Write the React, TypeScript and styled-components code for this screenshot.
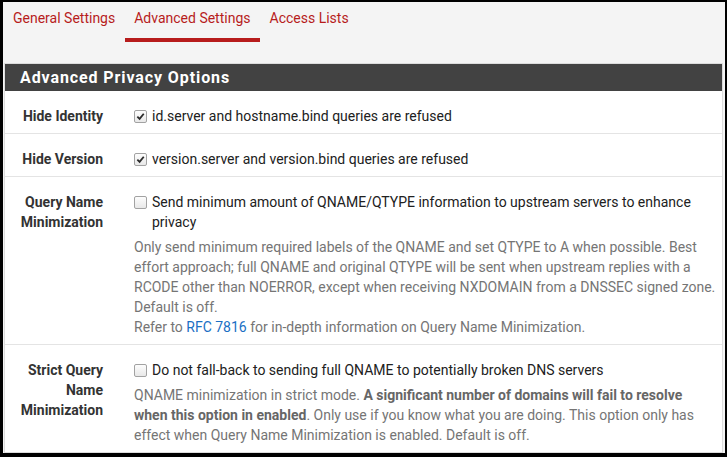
import styled, { createGlobalStyle } from "styled-components";

const GlobalStyle = createGlobalStyle`
  html, body {
    margin: 0;
    padding: 0;
    background: #000;
  }
  body {
    font-family: Roboto, "Noto Sans", "Liberation Sans", sans-serif;
    font-size: 14px;
    color: #212121;
  }
`;

const Frame = styled.div`
  box-sizing: border-box;
  width: 727px;
  height: 457px;
  border-style: solid;
  border-color: #000;
  border-width: 2px 2px 4px 3px;
  background: #f4f4f4;
  overflow: hidden;
`;

const Tabs = styled.div`
  display: flex;
  align-items: flex-end;
  padding-left: 1px;
  gap: 1px;
  margin-bottom: 21px;
`;

const Tab = styled.div<{ $active?: boolean }>`
  padding: 6px 9px 10px;
  line-height: 20px;
  font-size: 14px;
  color: #b71c1c;
  border-bottom: 4px solid ${(p) => (p.$active ? "#b71c1c" : "transparent")};
  cursor: pointer;
`;

const Panel = styled.div`
  margin: 0 2px 0 1px;
  border: 1px solid #dcdcdc;
  background: #fff;
`;

const PanelHeading = styled.div`
  background: #424242;
  color: #fff;
  font-weight: 700;
  font-size: 16px;
  letter-spacing: 0.9px;
  line-height: 27px;
  padding-left: 15px;
`;

const Row = styled.div`
  display: grid;
  grid-template-columns: 98px 1fr;
  column-gap: 31px;
  padding: 15px 0 7px;
  border-bottom: 1px solid #e4e4e4;

  &:last-child {
    border-bottom: none;
  }
`;

const Label = styled.div`
  text-align: right;
  font-weight: 700;
  color: #333;
  line-height: 20px;
  padding-left: 10px;
`;

const Field = styled.div`
  padding-right: 5px;
  line-height: 20px;
`;

const CheckLine = styled.div`
  display: flex;
  gap: 5px;
  color: #212121;
`;

const Box = styled.span`
  flex: none;
  box-sizing: border-box;
  width: 13px;
  height: 13px;
  margin-top: 4px;
  border: 1px solid #a2a2a2;
  border-radius: 2px;
  background: linear-gradient(#fdfdfd, #e8e8e8);
  display: flex;
  align-items: center;
  justify-content: center;
`;

const Help = styled.div`
  margin-top: 5px;
  color: #757575;

  b {
    color: #666;
  }
`;

const Link = styled.a`
  color: #1a6fc4;
  text-decoration: none;
`;

type Option = {
  label: string;
  text: string;
  checked: boolean;
  help?: React.ReactNode;
};

const options: Option[] = [
  {
    label: "Hide Identity",
    text: "id.server and hostname.bind queries are refused",
    checked: true,
  },
  {
    label: "Hide Version",
    text: "version.server and version.bind queries are refused",
    checked: true,
  },
  {
    label: "Query Name Minimization",
    text: "Send minimum amount of QNAME/QTYPE information to upstream servers to enhance privacy",
    checked: false,
    help: (
      <>
        Only send minimum required labels of the QNAME and set QTYPE to A when
        possible. Best effort approach; full QNAME and original QTYPE will be
        sent when upstream replies with a RCODE other than NOERROR, except when
        receiving NXDOMAIN from a DNSSEC signed zone. Default is off.
        <br />
        Refer to <Link href="#">RFC 7816</Link> for in-depth information on
        Query Name Minimization.
      </>
    ),
  },
  {
    label: "Strict Query Name Minimization",
    text: "Do not fall-back to sending full QNAME to potentially broken DNS servers",
    checked: false,
    help: (
      <>
        QNAME minimization in strict mode.{" "}
        <b>
          A significant number of domains will fail to resolve when this option
          in enabled
        </b>
        . Only use if you know what you are doing. This option only has effect
        when Query Name Minimization is enabled. Default is off.
      </>
    ),
  },
];

const tabs = ["General Settings", "Advanced Settings", "Access Lists"];

const App = () => {
  return (
    <>
      <GlobalStyle />
      <Frame>
        <Tabs>
          {tabs.map((t) => (
            <Tab key={t} $active={t === "Advanced Settings"}>
              {t}
            </Tab>
          ))}
        </Tabs>
        <Panel>
          <PanelHeading>Advanced Privacy Options</PanelHeading>
          {options.map((o) => (
            <Row key={o.label}>
              <Label>{o.label}</Label>
              <Field>
                <CheckLine>
                  <Box>
                    {o.checked && (
                      <svg width="9" height="9" viewBox="0 0 10 10">
                        <path
                          d="M1.5 5.2 L4 7.6 L8.6 2"
                          fill="none"
                          stroke="#2b2b2b"
                          strokeWidth="2"
                        />
                      </svg>
                    )}
                  </Box>
                  <span>{o.text}</span>
                </CheckLine>
                {o.help && <Help>{o.help}</Help>}
              </Field>
            </Row>
          ))}
        </Panel>
      </Frame>
    </>
  );
};

export default App;
